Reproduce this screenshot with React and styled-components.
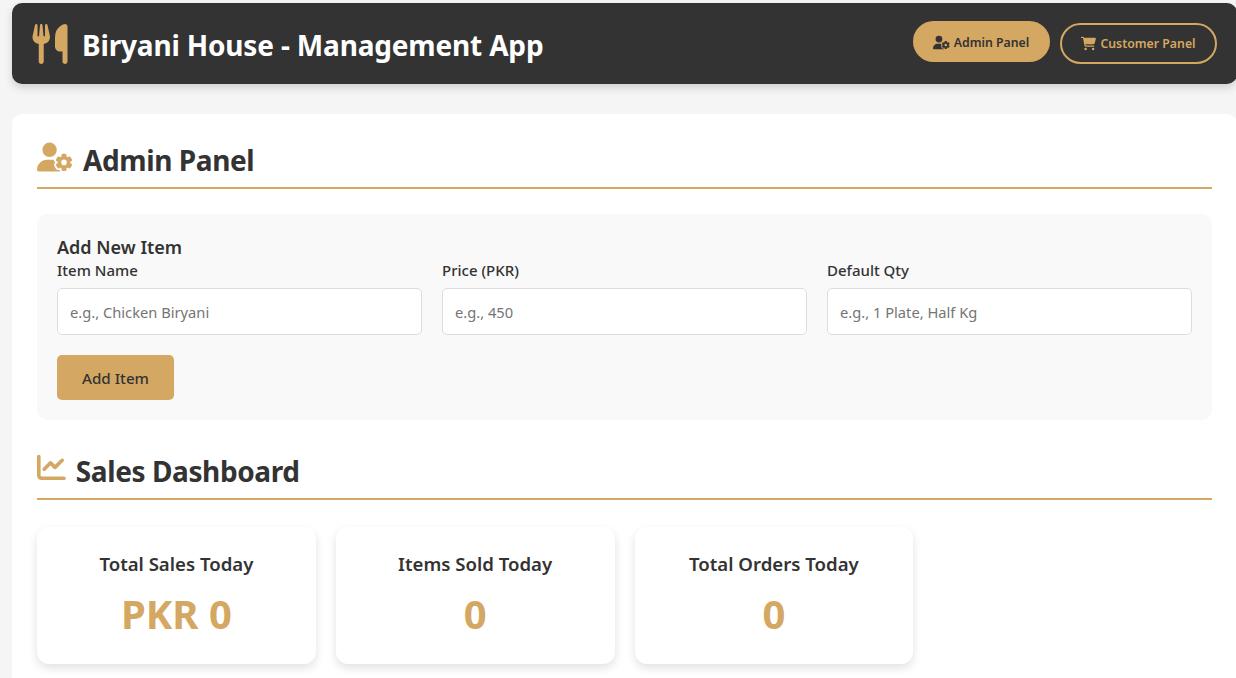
import React from "react";
import styled, { createGlobalStyle } from "styled-components";
import { FaUtensils, FaUserGear, FaChartLine, FaCartShopping } from "react-icons/fa6";

const gold = "#d4a762";
const dark = "#333333";

const GlobalStyle = createGlobalStyle`
    * {
        box-sizing: border-box;
    }
    html, body {
        margin: 0;
        height: 100%;
        overflow: hidden;
        background: #f5f5f5;
    }
    body {
        font-family: "Noto Sans", "Open Sans", "Liberation Sans", sans-serif;
        color: ${dark};
    }
`;

const Page = styled.div`
    width: 1237px;
    padding: 3px 0 0 12px;
`;

const Header = styled.header`
    height: 81px;
    background: ${dark};
    border-radius: 10px;
    box-shadow: 0 4px 8px rgba(0, 0, 0, 0.15);
    padding: 0 20px;
    display: flex;
    align-items: center;
    justify-content: space-between;
`;

const Brand = styled.h1`
    margin: 0;
    display: flex;
    align-items: center;
    gap: 14px;
    font-size: 28px;
    line-height: 44px;
    font-weight: 700;
    letter-spacing: -0.17px;
    color: #ffffff;
    svg {
        color: ${gold};
        width: 36px;
        height: 40px;
    }
`;

const BrandName = styled.span`
    padding-top: 3px;
`;

const Nav = styled.nav`
    display: flex;
    align-items: center;
    gap: 10px;
`;

const NavButton = styled.button`
    height: 41px;
    width: ${props => props.$width}px;
    padding: ${props => (props.$active ? "1px 1px 0 0" : "0")};
    display: flex;
    align-items: center;
    justify-content: center;
    gap: 4px;
    white-space: nowrap;
    border: 2px solid ${gold};
    border-radius: 25px;
    font-family: inherit;
    font-size: 12.3px;
    font-weight: 600;
    background: ${props => (props.$active ? gold : "transparent")};
    color: ${props => (props.$active ? dark : gold)};
    transform: ${props => (props.$active ? "translateY(-2px)" : "none")};
    svg {
        font-size: ${props => props.$icon}px;
    }
`;

const Main = styled.main`
    margin-top: 30px;
    height: 700px;
    background: #ffffff;
    border-radius: 10px;
    padding: 25px;
`;

const SectionTitle = styled.h2`
    margin: 0;
    height: 50px;
    display: flex;
    align-items: flex-start;
    gap: 10px;
    border-bottom: 2px solid ${gold};
    font-size: 28px;
    line-height: 42px;
    font-weight: 700;
    letter-spacing: -0.4px;
    svg {
        color: ${gold};
        font-size: ${props => props.$icon}px;
        margin-top: ${props => props.$iconTop}px;
    }
`;

const FormBox = styled.section`
    margin: 25px 0 30px;
    height: 206px;
    background: #f9f9f9;
    border-radius: 10px;
    padding: 20px;
`;

const FormTitle = styled.h3`
    margin: 0;
    font-size: 18px;
    line-height: 26px;
    font-weight: 600;
`;

const FieldGrid = styled.div`
    display: grid;
    grid-template-columns: repeat(3, 1fr);
    gap: 20px;
`;

const Field = styled.div`
    display: flex;
    flex-direction: column;
`;

const Label = styled.label`
    font-size: 15px;
    line-height: 20px;
    font-weight: 500;
    margin-bottom: 8px;
`;

const Input = styled.input`
    height: 47px;
    padding: 0 12px;
    background: #ffffff;
    border: 1px solid #dddddd;
    border-radius: 5px;
    font-family: inherit;
    font-size: 14.7px;
    &::placeholder {
        color: #757575;
    }
`;

const AddButton = styled.button`
    margin-top: 20px;
    width: 117px;
    height: 45px;
    padding: 1px 0 0;
    background: ${gold};
    border: none;
    border-radius: 5px;
    color: ${dark};
    font-family: inherit;
    font-size: 15.2px;
    font-weight: 500;
`;

const Stats = styled.div`
    margin-top: 27px;
    display: grid;
    grid-template-columns: repeat(4, 1fr);
    gap: 20px;
`;

const StatCard = styled.div`
    height: 137px;
    background: #ffffff;
    border-radius: 12px;
    box-shadow: 0 4px 10px rgba(0, 0, 0, 0.12);
    padding-top: 23px;
    text-align: center;
`;

const StatLabel = styled.h4`
    margin: 0;
    font-size: 18.6px;
    line-height: 27px;
    font-weight: 600;
`;

const StatValue = styled.div`
    margin-top: 11px;
    font-size: 40px;
    line-height: 52px;
    font-weight: 700;
    color: ${gold};
`;

const stats = [
    { label: "Total Sales Today", value: "PKR 0" },
    { label: "Items Sold Today", value: "0" },
    { label: "Total Orders Today", value: "0" }
];

const fields = [
    { label: "Item Name", placeholder: "e.g., Chicken Biryani" },
    { label: "Price (PKR)", placeholder: "e.g., 450" },
    { label: "Default Qty", placeholder: "e.g., 1 Plate, Half Kg" }
];

export default function App() {
    return (
        <Page>
            <GlobalStyle />
            <Header>
                <Brand>
                    <FaUtensils />
                    <BrandName>Biryani House - Management App</BrandName>
                </Brand>
                <Nav>
                    <NavButton $active $width={137} $icon={17}>
                        <FaUserGear />
                        Admin Panel
                    </NavButton>
                    <NavButton $width={157} $icon={15}>
                        <FaCartShopping />
                        Customer Panel
                    </NavButton>
                </Nav>
            </Header>
            <Main>
                <SectionTitle $icon={36} $iconTop={0}>
                    <FaUserGear />
                    Admin Panel
                </SectionTitle>
                <FormBox>
                    <FormTitle>Add New Item</FormTitle>
                    <FieldGrid>
                        {fields.map(f => (
                            <Field key={f.label}>
                                <Label>{f.label}</Label>
                                <Input placeholder={f.placeholder} />
                            </Field>
                        ))}
                    </FieldGrid>
                    <AddButton>Add Item</AddButton>
                </FormBox>
                <SectionTitle $icon={28.8} $iconTop={3}>
                    <FaChartLine />
                    Sales Dashboard
                </SectionTitle>
                <Stats>
                    {stats.map(s => (
                        <StatCard key={s.label}>
                            <StatLabel>{s.label}</StatLabel>
                            <StatValue>{s.value}</StatValue>
                        </StatCard>
                    ))}
                </Stats>
            </Main>
        </Page>
    );
}
